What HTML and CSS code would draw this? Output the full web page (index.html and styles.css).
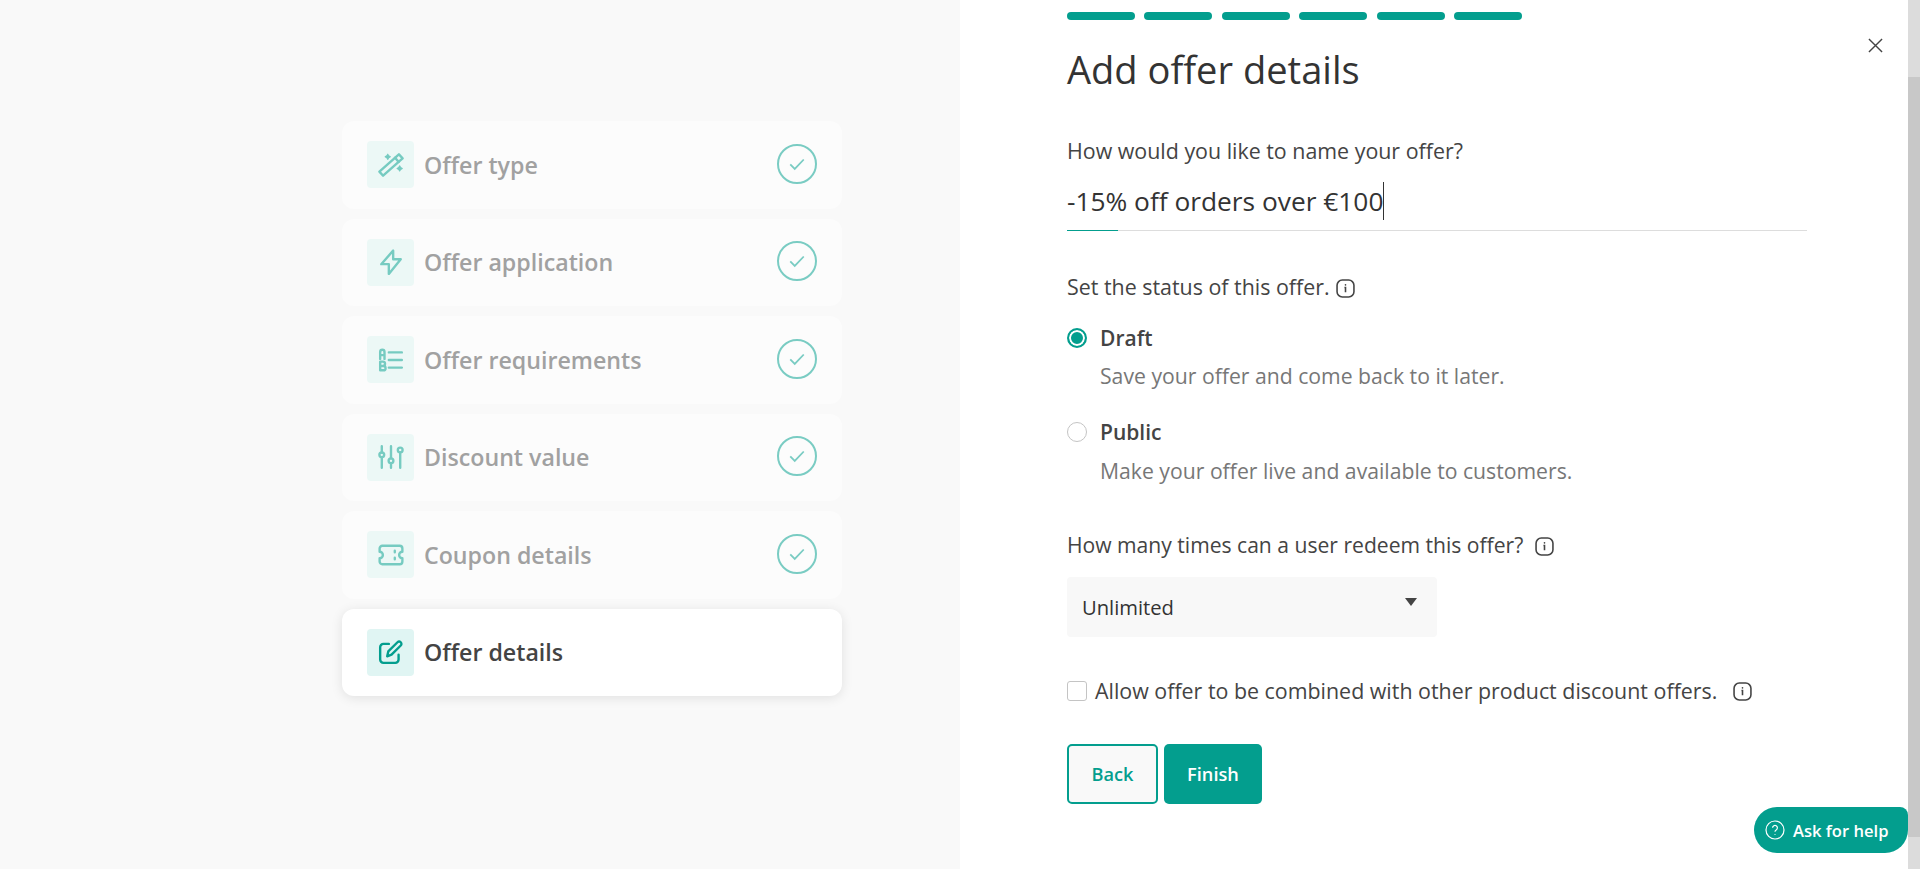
FILE: index.html
```html
<!DOCTYPE html>
<html lang="en">
<head>
    <meta charset="UTF-8">
    <meta name="viewport" content="width=device-width, initial-scale=1.0">
    <title>Add offer details</title>
    <link rel="stylesheet" href="styles.css">
</head>
<body>
    <div class="steps-panel">
        <div class="step done">
            <span class="step-icon">
                <svg viewBox="0 0 24 24"><path d="M1.300 18.100l3.400 3.800L22.700 5.900l-3.400-3.800z"/><path d="M15.700 5.300l3.400 3.800"/><path class="solid" d="M9 2l.9 1.500 1.500.9-1.500.9L9 6.800l-.9-1.500-1.500-.9 1.500-.9z"/><path class="solid" d="M20 12.800l.9 1.500 1.500.9-1.500.9-.9 1.500-.9-1.500-1.500-.9 1.500-.9z"/></svg>
            </span>
            <span class="step-name">Offer type</span>
            <span class="step-check"><svg viewBox="0 0 40 40"><path d="M12.500 20.500l5 5 10-10.500"/></svg></span>
        </div>
        <div class="step done">
            <span class="step-icon">
                <svg viewBox="0 0 24 24"><path d="M14 1.500v8h7L10 23v-9H3z"/></svg>
            </span>
            <span class="step-name">Offer application</span>
            <span class="step-check"><svg viewBox="0 0 40 40"><path d="M12.500 20.500l5 5 10-10.500"/></svg></span>
        </div>
        <div class="step done">
            <span class="step-icon">
                <svg viewBox="0 0 24 24"><path d="M2 11V4.500a2 2 0 0 1 4 0V11M2 7.500h4"/><path d="M2 13.500h2.500a1.800 1.800 0 0 1 0 4H2h3a1.800 1.800 0 0 1 0 4H2z"/><path d="M10 5h12M10 12h12M10 19h12"/></svg>
            </span>
            <span class="step-name">Offer requirements</span>
            <span class="step-check"><svg viewBox="0 0 40 40"><path d="M12.500 20.500l5 5 10-10.500"/></svg></span>
        </div>
        <div class="step done">
            <span class="step-icon">
                <svg viewBox="0 0 24 24"><circle cx="3.500" cy="10" r="2.200"/><circle cx="12" cy="15.500" r="2.200"/><circle cx="20.500" cy="5.500" r="2.200"/><path d="M3.500 2v5.800M3.500 12.200V22M12 2v11.300M12 17.700V22M20.500 7.700V22"/></svg>
            </span>
            <span class="step-name">Discount value</span>
            <span class="step-check"><svg viewBox="0 0 40 40"><path d="M12.500 20.500l5 5 10-10.500"/></svg></span>
        </div>
        <div class="step done">
            <span class="step-icon">
                <svg viewBox="0 0 24 24"><path d="M4 3.500h16a2.500 2.500 0 0 1 2.500 2.500v3a3 3 0 0 0 0 6v3a2.500 2.500 0 0 1-2.500 2.500H4A2.500 2.500 0 0 1 1.500 18v-3a3 3 0 0 0 0-6V6A2.500 2.500 0 0 1 4 3.500z"/><path d="M15.500 8v1.500M15.500 14.500V16"/></svg>
            </span>
            <span class="step-name">Coupon details</span>
            <span class="step-check"><svg viewBox="0 0 40 40"><path d="M12.500 20.500l5 5 10-10.500"/></svg></span>
        </div>
        <div class="step active">
            <span class="step-icon">
                <svg viewBox="0 0 24 24"><path d="M10 4.500H5A3 3 0 0 0 2 7.500V19a3 3 0 0 0 3 3h11a3 3 0 0 0 3-3v-4.500"/><path d="M8.500 16l1-4.500L18 3a2.100 2.100 0 0 1 3 3l-8.500 8.500z"/></svg>
            </span>
            <span class="step-name">Offer details</span>
        </div>
    </div>

    <div class="form-panel">
        <div class="progress">
            <span></span><span></span><span></span><span></span><span></span><span></span>
        </div>
        <h1>Add offer details</h1>

        <div class="label name-label">How would you like to name your offer?</div>
        <div class="name-value">-15% off orders over €100<span class="caret"></span></div>
        <div class="name-line"><span></span></div>

        <div class="label status-label">Set the status of this offer.
            <svg class="info" viewBox="0 0 18 18"><rect x="1" y="1" width="16" height="16" rx="5"/><path d="M8 8h1v4.500"/><circle class="dot" cx="9" cy="5.500" r=".8"/></svg>
        </div>
        <div class="option first">
            <span class="radio checked"></span>
            <span class="option-name">Draft</span>
        </div>
        <div class="option-text">Save your offer and come back to it later.</div>
        <div class="option">
            <span class="radio"></span>
            <span class="option-name">Public</span>
        </div>
        <div class="option-text last">Make your offer live and available to customers.</div>

        <div class="label redeem-label">How many times can a user redeem this offer?
            <svg class="info" viewBox="0 0 18 18"><rect x="1" y="1" width="16" height="16" rx="5"/><path d="M8 8h1v4.500"/><circle class="dot" cx="9" cy="5.500" r=".8"/></svg>
        </div>
        <div class="select">
            <span>Unlimited</span>
            <span class="arrow"></span>
        </div>

        <div class="combine">
            <span class="checkbox"></span>
            <span class="label">Allow offer to be combined with other product discount offers.</span>
            <svg class="info" viewBox="0 0 18 18"><rect x="1" y="1" width="16" height="16" rx="5"/><path d="M8 8h1v4.500"/><circle class="dot" cx="9" cy="5.500" r=".8"/></svg>
        </div>

        <div class="buttons">
            <button class="btn-back">Back</button>
            <button class="btn-finish">Finish</button>
        </div>

        <button class="close">
            <svg viewBox="0 0 16 16"><path d="M1 1l14 14M15 1L1 15"/></svg>
        </button>
        <button class="help">
            <svg viewBox="0 0 20 20"><circle cx="10" cy="10" r="9"/><path d="M7.600 7.800a2.400 2.400 0 1 1 3.600 2.100c-.8.500-1.200 1-1.200 1.800"/><circle class="dot" cx="10" cy="14.500" r=".6"/></svg>
            Ask for help
        </button>
    </div>

    <div class="scrollbar"><div class="thumb"></div></div>
</body>
</html>
```

FILE: styles.css
```css
* {
    box-sizing: border-box;
}
body {
    font-family: 'Open Sans', sans-serif;
    background-color: #fff;
    color: #444;
    display: flex;
    height: 100vh;
    margin: 0;
    overflow: hidden;
}
.steps-panel {
    width: 960px;
    background: #f9f9f9;
    padding: 121px 0 0 342px;
}
.step {
    width: 500px;
    height: 87.5px;
    margin-bottom: 10px;
    padding: 0 25px;
    display: flex;
    align-items: center;
    background: #fff;
    border-radius: 12px;
}
.step.done {
    background: #fcfcfc;
}
.step.active {
    box-shadow: 0 2px 12px rgba(0, 0, 0, 0.1);
}
.step-icon {
    width: 47px;
    height: 47px;
    margin-right: 10px;
    background: #e0f5f3;
    border-radius: 4px;
    display: flex;
    align-items: center;
    justify-content: center;
}
.step.done .step-icon {
    background: #ecf8f6;
}
.step-icon svg {
    width: 26px;
    height: 26px;
    fill: none;
    stroke: #039e8e;
    stroke-width: 2.200;
    stroke-linecap: round;
    stroke-linejoin: round;
}
.step.done .step-icon svg {
    stroke: #76cbc1;
}
.step.done .step-icon .solid {
    fill: #76cbc1;
    stroke-width: 1;
}
.step-name {
    flex: 1;
    font-size: 23.200px;
    font-weight: 600;
    color: #444;
}
.step.done .step-name {
    color: #a1a1a1;
}
.step-check {
    width: 40px;
    height: 40px;
    margin-top: -2px;
    border: 2px solid #7accc3;
    border-radius: 50%;
}
.step-check svg {
    display: block;
    width: 36px;
    height: 36px;
    fill: none;
    stroke: #7accc3;
    stroke-width: 2;
}
.form-panel {
    flex: 1;
    position: relative;
    padding: 12px 0 0 107px;
}
.progress {
    display: flex;
    gap: 9.500px;
    width: 455px;
}
.progress span {
    flex: 1;
    height: 8px;
    background: #039e8e;
    border-radius: 4px;
}
h1 {
    margin: 21px 0 0;
    font-size: 38.100px;
    line-height: 56px;
    font-weight: 400;
    color: #333;
}
.label {
    font-size: 21.400px;
    line-height: 26px;
    color: #444;
}
.name-label {
    margin-top: 41px;
}
.name-value {
    margin-top: 18px;
    display: flex;
    font-size: 26.300px;
    line-height: 38px;
    color: #333;
}
.caret {
    width: 1px;
    height: 38px;
    background: #333;
}
.name-line {
    width: 740px;
    height: 1px;
    margin-top: 10px;
    background: #ddd;
}
.name-line span {
    display: block;
    width: 51px;
    height: 1px;
    background: #039e8e;
}
.status-label {
    margin-top: 43px;
}
.info {
    width: 19px;
    height: 19px;
    margin-left: 6px;
    vertical-align: -3px;
    fill: none;
    stroke: #444;
    stroke-width: 1.500;
}
.status-label .info {
    margin-left: 1px;
}
.info .dot,
.help .dot {
    fill: #444;
    stroke: none;
}
.option {
    display: flex;
    align-items: center;
    margin-top: 30px;
    font-size: 21px;
    line-height: 26px;
}
.option.first {
    margin-top: 25px;
}
.radio {
    width: 20px;
    height: 20px;
    margin-right: 13px;
    border: 1px solid #c4c4c4;
    border-radius: 50%;
    background: #fff;
}
.radio.checked {
    border: 2px solid #039e8e;
    box-shadow: inset 0 0 0 2px #fff;
    background: #039e8e;
}
.option-name {
    font-weight: 600;
}
.option-text {
    margin: 12px 0 0 33px;
    font-size: 21.200px;
    line-height: 26px;
    color: #777;
}
.option-text.last {
    margin-top: 13px;
}
.redeem-label {
    margin-top: 48px;
    font-size: 21.100px;
}
.select {
    width: 370px;
    height: 60px;
    margin-top: 19px;
    padding: 0 15px;
    display: flex;
    align-items: center;
    justify-content: space-between;
    background: #f8f8f8;
    border-radius: 4px;
    font-size: 20.200px;
    color: #333;
}
.arrow {
    width: 0;
    height: 0;
    margin: -10px 5px 0 0;
    border-left: 6px solid transparent;
    border-right: 6px solid transparent;
    border-top: 8px solid #444;
}
.combine {
    display: flex;
    align-items: center;
    margin-top: 41px;
}
.checkbox {
    width: 20px;
    height: 20px;
    margin-right: 8px;
    border: 1px solid #c4c4c4;
    border-radius: 3px;
}
.combine .info {
    margin-left: 16px;
    vertical-align: baseline;
}
.buttons {
    display: flex;
    gap: 6px;
    margin-top: 40px;
}
.buttons button {
    height: 60px;
    font-family: inherit;
    font-size: 18.200px;
    font-weight: 600;
    border-radius: 5px;
    cursor: pointer;
}
.btn-back {
    width: 91px;
    background: #f9f9f9;
    color: #039e8e;
    border: 2px solid #039e8e;
}
.btn-finish {
    width: 98px;
    background: #039e8e;
    color: #fff;
    border: none;
}
.close {
    position: absolute;
    top: 38px;
    left: 908px;
    width: 15px;
    height: 15px;
    padding: 0;
    background: none;
    border: none;
}
.close svg {
    display: block;
    fill: none;
    stroke: #444;
    stroke-width: 1.500;
}
.help {
    position: absolute;
    left: 794px;
    top: 807px;
    width: 154px;
    height: 46px;
    padding: 0 0 0 11px;
    display: flex;
    align-items: center;
    gap: 8px;
    background: #039e8e;
    color: #fff;
    border: none;
    border-radius: 23px 8px 23px 23px;
    font-family: inherit;
    font-size: 16.600px;
    font-weight: 600;
}
.help svg {
    width: 20px;
    height: 20px;
    fill: none;
    stroke: #fff;
    stroke-width: 1.200;
}
.help .dot {
    fill: #fff;
}
.scrollbar {
    width: 12px;
    background: #dcdcdc;
    padding-top: 77px;
}
.thumb {
    height: 760px;
    background: #c8c8c8;
}
```
